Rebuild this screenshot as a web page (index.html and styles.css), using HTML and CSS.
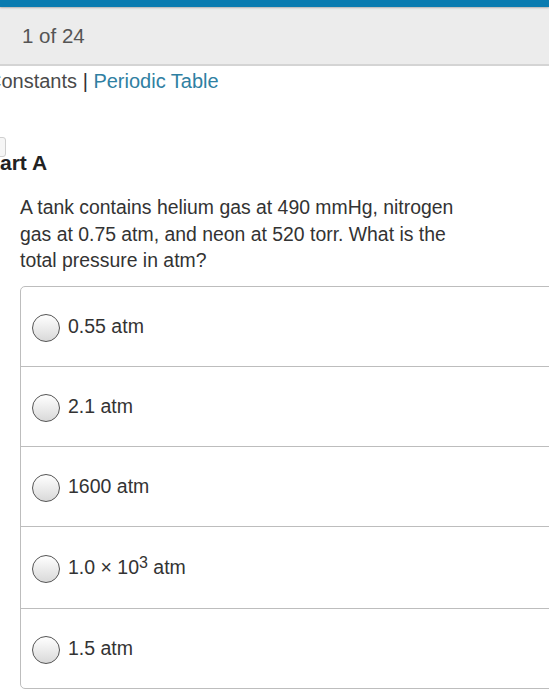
FILE: index.html
```html
<!DOCTYPE html>
<html>
<head>
<meta charset="utf-8">
<link rel="stylesheet" href="styles.css">
</head>
<body>
<div class="topbar"></div>
<div class="header"><span class="count">1 of 24</span></div>
<div class="links"><span class="lk-gray">Constants</span> <span class="sep">|</span> <span class="lk">Periodic Table</span></div>
<div class="part">
  <span class="chk"></span>
  <h2 class="part-title">Part A</h2>
</div>
<p class="question">A tank contains helium gas at 490 mmHg, nitrogen gas at 0.75 atm, and neon at 520 torr. What is the total pressure in atm?</p>
<div class="options">
  <div class="opt"><span class="radio"></span><span class="lbl">0.55 atm</span></div>
  <div class="opt"><span class="radio"></span><span class="lbl">2.1 atm</span></div>
  <div class="opt"><span class="radio"></span><span class="lbl">1600 atm</span></div>
  <div class="opt tall"><span class="radio"></span><span class="lbl">1.0 × 10<sup>3</sup> atm</span></div>
  <div class="opt"><span class="radio"></span><span class="lbl">1.5 atm</span></div>
</div>
</body>
</html>
```
FILE: styles.css
```css
html, body {
  margin: 0;
  padding: 0;
  background: #fff;
  overflow: hidden;
  width: 549px;
  height: 700px;
  font-family: "Liberation Sans", Arial, sans-serif;
  color: #333;
}
.topbar {
  height: 7px;
  background: #0a7bb0;
  box-shadow: 0 1px 2px rgba(0,0,0,0.25);
  position: relative;
  z-index: 1;
}
.header {
  height: 57px;
  background: #ececec;
  border-bottom: 2px solid #d4d4d4;
  display: flex;
  align-items: center;
  padding-left: 22px;
}
.count {
  font-size: 20.5px;
  color: #555;
  margin-top: 1px;
}
.links {
  font-size: 20px;
  margin-left: -13px;
  margin-top: 3px;
  height: 24px;
  line-height: 24px;
  white-space: nowrap;
}
.lk-gray { color: #4a4a4a; }
.sep { color: #333; }
.lk { color: #2f80a2; }
.part {
  position: relative;
  margin-top: 52px;
  height: 36px;
}
.chk {
  position: absolute;
  left: -14px;
  top: -8px;
  width: 18px;
  height: 18px;
  border: 1px solid #cfcfcf;
  border-radius: 3px;
  background: #f6f6f6;
}
.part-title {
  margin: 0 0 0 -14px;
  font-size: 21px;
  font-weight: bold;
  color: #222;
  line-height: 36px;
}
.question {
  margin: 13px 0 0 20px;
  width: 460px;
  font-size: 19.4px;
  line-height: 26.5px;
  color: #333;
}
.options {
  margin: 12px 0 0 20px;
  width: 560px;
  border: 1.5px solid #bdbdbd;
  border-radius: 5px;
}
.opt {
  height: 79px;
  display: flex;
  align-items: center;
  padding-left: 11px;
  border-top: 1.5px solid #bdbdbd;
}
.opt:first-child { border-top: none; }
.opt.tall { height: 81px; }
.radio {
  width: 26px;
  height: 26px;
  border: 1.5px solid #555;
  border-radius: 50%;
  background: linear-gradient(#ffffff, #d9d9d9);
  flex: none;
  margin-top: 3px;
}
.lbl {
  margin-left: 8px;
  font-size: 19.5px;
  color: #333;
}
sup {
  font-size: 16px;
  vertical-align: 6px;
  line-height: 0;
}
```
